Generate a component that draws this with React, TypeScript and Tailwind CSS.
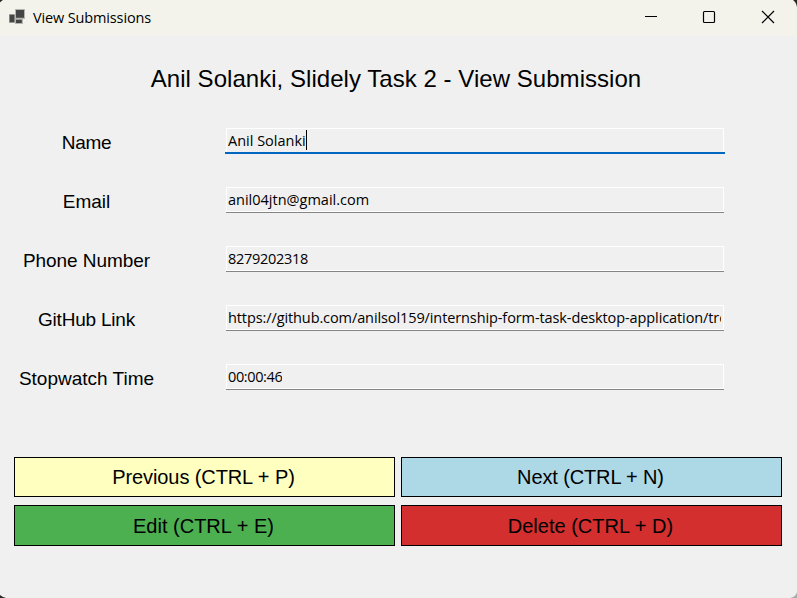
type Field = { label: string; value: string; labelClass: string; valueClass: string; focused?: boolean };

const fields: Field[] = [
  { label: 'Name', value: 'Anil Solanki', labelClass: 'tracking-[-0.3px]', valueClass: '', focused: true },
  { label: 'Email', value: 'anil04jtn@gmail.com', labelClass: '', valueClass: '' },
  { label: 'Phone Number', value: '8279202318', labelClass: 'tracking-[-0.05px]', valueClass: 'tracking-[-0.29px]' },
  {
    label: 'GitHub Link',
    value: 'https://github.com/anilsol159/internship-form-task-desktop-application/tree',
    labelClass: 'tracking-[-0.2px]',
    valueClass: 'tracking-[-0.1px]',
  },
  { label: 'Stopwatch Time', value: '00:00:46', labelClass: '', valueClass: 'tracking-[-0.37px]' },
];

const actions = [
  { label: 'Previous (CTRL + P)', className: 'h-10 bg-[#ffffc0] tracking-[-0.1px]' },
  { label: 'Next (CTRL + N)', className: 'h-10 bg-[#add8e6] tracking-[-0.13px]' },
  { label: 'Edit (CTRL + E)', className: 'h-[41px] bg-[#4caf50]' },
  { label: 'Delete (CTRL + D)', className: 'h-[41px] bg-[#d32f2f]' },
];

function TitleBar() {
  return (
    <header className="flex h-9 items-start bg-[#f3f3eb]">
      <svg className="ml-[9px] mt-[9px] shrink-0" width="16" height="15" viewBox="0 0 16 15">
        <path fill="#b4b4b0" d="M6 0h10v10H6zM0 5h6v9H0zM6 10h8v5H6z" />
        <path fill="#444" d="M7 1h8v7.7H7zM0.6 5.8h4.8v7.4H0.6zM7 10.8h5.8v3.2H7z" />
      </svg>
      <h1 className="ml-2 mt-2 whitespace-pre font-['Open_Sans','Noto_Sans',sans-serif] text-[14.5px] leading-[20px] tracking-[-0.14px] text-black">
        View Submissions
      </h1>
      <div className="ml-auto flex">
        <svg className="h-9 w-[58px]" viewBox="0 0 58 36" fill="none" stroke="#000">
          <path d="M23 16.5h12" />
        </svg>
        <svg className="h-9 w-[59px]" viewBox="0 0 59 36" fill="none" stroke="#000" strokeWidth="1.2">
          <rect x="23.5" y="11.5" width="11" height="11" rx="1" />
        </svg>
        <svg className="h-9 w-[58px]" viewBox="0 0 58 36" fill="none" stroke="#000" strokeWidth="1.2">
          <path d="M23 11l12 12M35 11L23 23" />
        </svg>
      </div>
    </header>
  );
}

function FieldRow({ label, value, labelClass, valueClass, focused }: Field) {
  return (
    <div className="flex h-[59px] items-start">
      <label className={`mt-[5px] w-[173px] whitespace-pre text-center text-[19px] leading-[22px] ${labelClass}`}>{label}</label>
      <div
        className={
          focused
            ? 'ml-[52px] flex h-[27px] w-[500px] border-b-2 border-[#0067c0] pt-px'
            : 'ml-[52px] flex h-[27px] w-[500px] pt-px'
        }
      >
        <div
          className={
            focused
              ? 'ml-px flex h-6 w-[498px] overflow-hidden border-l border-r border-t border-white pl-px pr-0.5'
              : 'ml-px flex h-[26px] w-[498px] border-b border-[#858585]'
          }
        >
          <div
            className={
              focused
                ? 'flex overflow-hidden pt-px'
                : 'flex h-[25px] w-[498px] overflow-hidden border border-white pl-px pr-0.5 pt-px'
            }
          >
            <span
              className={`block overflow-hidden whitespace-pre font-['Open_Sans','Noto_Sans',sans-serif] text-[14.5px] leading-[22px] text-black ${valueClass}`}
            >
              {value}
            </span>
            {focused && <i className="block h-5 w-px bg-black" />}
          </div>
        </div>
      </div>
    </div>
  );
}

function WindowCorners() {
  return (
    <svg className="pointer-events-none absolute inset-0" width="797" height="598" viewBox="0 0 797 598">
      <path fill="#2a2626" d="M0 0h3Q1 1 0 2.5z" />
      <path fill="#2a2626" d="M797 0h-4Q796 2 797 7z" />
      <path fill="#2a2626" d="M0 598v-3Q2 597 6 598z" />
      <path fill="#aaa" d="M797 598v-6Q796 597 790 598z" />
    </svg>
  );
}

export default function App() {
  return (
    <div className="relative flex h-[598px] w-[797px] flex-col overflow-hidden bg-[#f0f0f0] font-['Liberation_Sans',Arial,sans-serif] text-black">
      <TitleBar />
      <h2 className="mt-[29px] w-[792px] whitespace-pre text-center text-[24px] leading-[28px] tracking-[0.04px]">
        Anil Solanki, Slidely Task 2 - View Submission
      </h2>
      <main className="mt-[34px] flex flex-col">
        {fields.map((field) => (
          <FieldRow key={field.label} {...field} />
        ))}
      </main>
      <div className="ml-[14px] mt-[35px] grid w-[768px] grid-cols-2 gap-x-1.5 gap-y-2">
        {actions.map((action) => (
          <button
            key={action.label}
            className={`flex items-center justify-center border border-black pr-0.5 text-[20px] leading-[24px] ${action.className}`}
          >
            {action.label}
          </button>
        ))}
      </div>
      <WindowCorners />
    </div>
  );
}
